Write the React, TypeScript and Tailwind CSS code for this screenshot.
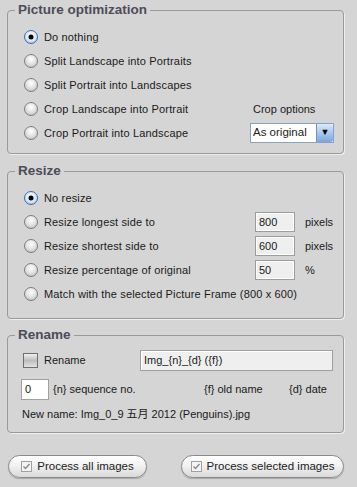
import React from 'react';

const font = { fontFamily: '"Liberation Sans", "Noto Sans CJK SC", Arial, sans-serif' };

function Radio({ checked }: { checked?: boolean }) {
    return (
        <span
            className={`relative inline-block h-[14px] w-[14px] shrink-0 rounded-full border ${
                checked
                    ? 'border-[#3d6fa8] bg-[radial-gradient(circle_at_50%_40%,#ffffff_0%,#d8e8f8_55%,#7fa8d6_100%)]'
                    : 'border-[#7e7e7e] bg-[radial-gradient(circle_at_50%_35%,#ffffff_0%,#e2e2e2_50%,#b0b0b0_100%)]'
            }`}
        >
            {checked && <span className="absolute left-1/2 top-1/2 h-[5px] w-[5px] -translate-x-1/2 -translate-y-1/2 rounded-full bg-black" />}
        </span>
    );
}

function RadioRow({ label, checked, children }: { label: string; checked?: boolean; children?: React.ReactNode }) {
    return (
        <div className="flex h-[24px] items-center">
            <div className="ml-[16px] flex items-center">
                <Radio checked={checked} />
                <span className="ml-[6px] whitespace-nowrap tracking-[0.15px]">{label}</span>
            </div>
            {children}
        </div>
    );
}

function NumBox({ value }: { value: string }) {
    return (
        <div className="flex h-[20px] w-[40px] items-center border border-[#9c9c9c] bg-[#efefef] pl-[3px] shadow-[inset_1px_1px_0_#ffffff,inset_-1px_-1px_0_#ffffff]">
            {value}
        </div>
    );
}

function Group({ title, children, className = '' }: { title: string; children: React.ReactNode; className?: string }) {
    return (
        <fieldset className={`ml-[7px] w-[337px] rounded-[4px] border border-[#9a9a9a] shadow-[1px_1px_0_#eeeeee] ${className}`}>
            <legend className="ml-[7px] px-[3px] text-[13.5px] font-bold leading-[16px] text-[#4c4c5a]">{title}</legend>
            {children}
        </fieldset>
    );
}

function ProcessButton({ label, className = '' }: { label: string; className?: string }) {
    return (
        <div className={`flex h-[23px] items-center justify-center rounded-full border border-[#8a8a8a] bg-[linear-gradient(#ffffff,#f2f2f2_45%,#d9d9d9)] shadow-[0_1px_1px_#a8a8a8] ${className}`}>
            <span className="mr-[5px] flex h-[11px] w-[11px] items-center justify-center border border-[#a0a0a0] bg-[#f4f4f4]">
                <svg width="9" height="9" viewBox="0 0 9 9">
                    <path d="M1.5 4.5 L3.5 6.5 L7.5 2" fill="none" stroke="#8a8a8a" strokeWidth="1.4" />
                </svg>
            </span>
            <span className="text-[11.5px] text-[#222]">{label}</span>
        </div>
    );
}

export default function App() {
    return (
        <div className="h-[487px] w-[357px] overflow-hidden bg-[#d5d5d5] pt-[2px] text-[11px] text-[#1a1a1a]" style={font}>
            <Group title="Picture optimization" className="h-[152px] pt-[7px]">
                <RadioRow label="Do nothing" checked />
                <RadioRow label="Split Landscape into Portraits" />
                <RadioRow label="Split Portrait into Landscapes" />
                <RadioRow label="Crop Landscape into Portrait">
                    <span className="ml-auto mr-[9px] w-[82px] whitespace-nowrap pl-[1px]">Crop options</span>
                </RadioRow>
                <RadioRow label="Crop Portrait into Landscape">
                    <div className="ml-auto mr-[9px] flex h-[20px] w-[84px] border border-[#8aa2c0] bg-white">
                        <span className="flex flex-1 items-center pl-[2px] text-[11.5px]">As original</span>
                        <span className="flex w-[17px] items-center justify-center rounded-r-[2px] border-l border-[#6f94c4] bg-[linear-gradient(#dceafa,#a9c8ee_50%,#7aa6de)] text-[9px] text-black">▼</span>
                    </div>
                </RadioRow>
            </Group>

            <Group title="Resize" className="mt-[9px] h-[156px] pt-[7px]">
                <RadioRow label="No resize" checked />
                <RadioRow label="Resize longest side to">
                    <div className="ml-auto mr-[9px] flex w-[79px] items-center">
                        <NumBox value="800" />
                        <span className="ml-[10px]">pixels</span>
                    </div>
                </RadioRow>
                <RadioRow label="Resize shortest side to">
                    <div className="ml-auto mr-[9px] flex w-[79px] items-center">
                        <NumBox value="600" />
                        <span className="ml-[10px]">pixels</span>
                    </div>
                </RadioRow>
                <RadioRow label="Resize percentage of original">
                    <div className="ml-auto mr-[9px] flex w-[79px] items-center">
                        <NumBox value="50" />
                        <span className="ml-[10px]">%</span>
                    </div>
                </RadioRow>
                <RadioRow label="Match with the selected Picture Frame (800 x 600)" />
            </Group>

            <Group title="Rename" className="mt-[8px] h-[106px] pt-[7px]">
                <div className="flex h-[21px] items-center">
                    <span className="ml-[15px] h-[15px] w-[15px] border border-[#6e6e6e] bg-[linear-gradient(#f0f0f0,#bdbdbd_50%,#e2e2e2)]" />
                    <span className="ml-[6px]">Rename</span>
                    <div className="ml-auto mr-[10px] flex h-[21px] w-[193px] items-center border border-[#a0a0a0] bg-[#efefef] pl-[3px] shadow-[inset_1px_1px_0_#ffffff]">
                        Img_{'{n}'}_{'{d}'} ({'{f}'})
                    </div>
                </div>
                <div className="mt-[8px] flex h-[21px] items-center">
                    <div className="ml-[13px] flex h-[21px] w-[28px] items-center border border-[#a0a0a0] bg-white pl-[3px]">0</div>
                    <span className="ml-[4px] w-[151px]">{'{n}'} sequence no.</span>
                    <span className="w-[85px]">{'{f}'} old name</span>
                    <span>{'{d}'} date</span>
                </div>
                <div className="ml-[14px] mt-[4px] flex h-[20px] items-center">New name: Img_0_9 五月 2012 (Penguins).jpg</div>
            </Group>

            <div className="mt-[22px] flex items-center">
                <ProcessButton label="Process all images" className="ml-[8px] w-[139px]" />
                <ProcessButton label="Process selected images" className="ml-[34px] w-[163px]" />
            </div>
        </div>
    );
}
